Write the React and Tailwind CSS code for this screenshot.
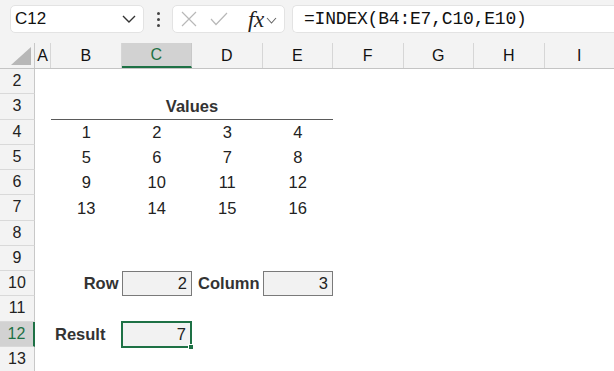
import React from "react";

const COLS = ["A", "B", "C", "D", "E", "F", "G", "H", "I"];
const colW = (c) => (c === "A" ? "w-[16px]" : "w-[70.5px]");

const sans = { fontFamily: '"Liberation Sans", Arial, sans-serif' };

function Cell({ col, children, className = "" }) {
  return (
    <div className={`${colW(col)} shrink-0 h-full flex items-center ${className}`}>
      {children}
    </div>
  );
}

function Row({ n, children, selected }) {
  return (
    <div className="flex h-[25.25px]">
      <div
        className={`w-[35px] shrink-0 h-full flex items-center justify-center text-[16px] border-b border-[#d9d9d9] ${
          selected
            ? "bg-[#d2d2d2] text-[#1e7145] border-r-2 border-r-[#1e7145]"
            : "bg-[#f3f3f3] text-[#222] border-r border-r-[#c8c8c8]"
        }`}
      >
        {n}
      </div>
      <div className="flex h-full flex-1">{children}</div>
    </div>
  );
}

const DataRow = ({ n, vals }) => (
  <Row n={n}>
    <Cell col="A" />
    {vals.map((v, i) => (
      <Cell key={i} col="B" className="justify-center text-[16.5px] text-[#222]">
        {v}
      </Cell>
    ))}
  </Row>
);

export default function App() {
  return (
    <div className="w-[614px] h-[371px] overflow-hidden bg-white" style={sans}>
      {/* Formula bar */}
      <div className="h-[43px] bg-[#f3f3f3] flex items-start pt-[5px] pl-[10px]">
        <div className="w-[134px] h-[28px] bg-white rounded-[5px] border border-[#e3e3e3] flex items-center pl-[4px] pr-[6px]">
          <span className="text-[17px] text-[#111] flex-1">C12</span>
          <svg width="14" height="8" viewBox="0 0 14 8" className="mr-[1px]">
            <path d="M1 1 L7 7 L13 1" fill="none" stroke="#333" strokeWidth="1.4" />
          </svg>
        </div>
        <div className="w-[28px] h-[28px] flex flex-col items-center justify-center gap-[3px]">
          <span className="w-[3px] h-[3px] bg-[#444] rounded-full" />
          <span className="w-[3px] h-[3px] bg-[#444] rounded-full" />
          <span className="w-[3px] h-[3px] bg-[#444] rounded-full" />
        </div>
        <div className="w-[113px] h-[28px] bg-white rounded-[5px] border border-[#e3e3e3] flex items-center pl-[8px]">
          <svg width="16" height="16" viewBox="0 0 16 16">
            <path d="M1 1 L15 15 M15 1 L1 15" stroke="#b8b8b8" strokeWidth="1.2" fill="none" />
          </svg>
          <svg width="18" height="14" viewBox="0 0 18 14" className="ml-[13px]">
            <path d="M1 7 L6 12.5 L17 1" stroke="#b8b8b8" strokeWidth="1.2" fill="none" />
          </svg>
          <span
            className="ml-[20px] text-[23px] italic text-[#222] leading-none tracking-[-0.5px]"
            style={{ fontFamily: '"Liberation Serif", "Times New Roman", serif' }}
          >
            fx
          </span>
          <svg width="11" height="7" viewBox="0 0 11 7" className="ml-[2px] mt-[2px]">
            <path d="M1 1 L5.5 6 L10 1" fill="none" stroke="#666" strokeWidth="1.1" />
          </svg>
        </div>
        <div className="ml-[7px] flex-1 h-[28px] bg-white rounded-l-[5px] border border-r-0 border-[#e3e3e3] flex items-center pl-[11px]">
          <span
            className="text-[18px] text-[#111] tracking-[-0.2px]"
            style={{ fontFamily: '"Liberation Mono", "DejaVu Sans Mono", monospace' }}
          >
            =INDEX(B4:E7,C10,E10)
          </span>
        </div>
      </div>

      {/* Column headers */}
      <div className="flex h-[26px] bg-[#f3f3f3] border-b border-[#c4c4c4]">
        <div className="w-[35px] shrink-0 h-full border-r border-[#c8c8c8] flex items-end justify-end pr-[3px] pb-[3px]">
          <svg width="20" height="18" viewBox="0 0 20 18">
            <path d="M20 0 L20 18 L0 18 Z" fill="#b7b7b7" />
          </svg>
        </div>
        {COLS.map((c) => (
          <div
            key={c}
            className={`${colW(c)} shrink-0 h-full flex items-center justify-center text-[16px] ${
              c === "C"
                ? "bg-[#d2d2d2] text-[#1e7145] border-b-2 border-[#1e7145] border-r border-r-[#c8c8c8]"
                : "text-[#111] border-r border-[#d6d6d6]"
            }`}
          >
            {c}
          </div>
        ))}
      </div>

      {/* Rows */}
      <Row n={2} />
      <Row n={3}>
        <Cell col="A" />
        <div className="w-[282px] shrink-0 h-full flex items-center justify-center font-bold text-[16.5px] text-[#333] border-b border-[#5a5a5a]">
          Values
        </div>
      </Row>
      <DataRow n={4} vals={[1, 2, 3, 4]} />
      <DataRow n={5} vals={[5, 6, 7, 8]} />
      <DataRow n={6} vals={[9, 10, 11, 12]} />
      <DataRow n={7} vals={[13, 14, 15, 16]} />
      <Row n={8} />
      <Row n={9} />
      <Row n={10}>
        <Cell col="A" />
        <Cell col="B" className="justify-end pr-[3px] font-bold text-[16.5px] text-[#333]">
          Row
        </Cell>
        <Cell col="C" className="justify-end pr-[4px] text-[16.5px] text-[#222] bg-[#f2f2f2] border border-[#7a7a7a]">
          2
        </Cell>
        <Cell col="D" className="justify-end pr-[3px] font-bold text-[16.5px] text-[#333]">
          Column
        </Cell>
        <Cell col="E" className="justify-end pr-[4px] text-[16.5px] text-[#222] bg-[#f2f2f2] border border-[#7a7a7a]">
          3
        </Cell>
      </Row>
      <Row n={11} />
      <Row n={12} selected>
        <Cell col="A" />
        <Cell col="B" className="pl-[4px] font-bold text-[16.5px] text-[#333]">
          Result
        </Cell>
        <div className="relative w-[71.5px] -ml-[1px] shrink-0 h-[27px] -mt-[0.5px] flex items-center justify-end pr-[4px] text-[16.5px] text-[#222] bg-[#f2f2f2] border-2 border-[#1e7145]">
          7
          <span className="absolute -right-[4px] -bottom-[4px] w-[6px] h-[6px] bg-[#1e7145] border border-white" />
        </div>
      </Row>
      <Row n={13} />
    </div>
  );
}
